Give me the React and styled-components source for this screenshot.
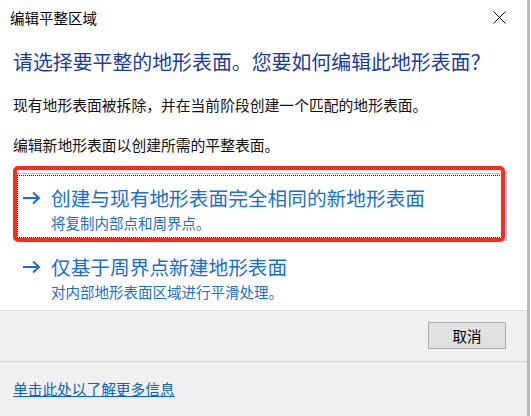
import styled, { createGlobalStyle } from "styled-components";

const GlobalStyle = createGlobalStyle`
  html, body {
    margin: 0;
    padding: 0;
    background: #ffffff;
  }
  body {
    font-family: "Noto Sans CJK SC", "Noto Sans", sans-serif;
  }
`;

const options = [
  {
    title: "创建与现有地形表面完全相同的新地形表面",
    note: "将复制内部点和周界点。",
    focused: true,
  },
  {
    title: "仅基于周界点新建地形表面",
    note: "对内部地形表面区域进行平滑处理。",
    focused: false,
  },
];

function Arrow() {
  return (
    <svg width="19" height="14" viewBox="0 0 19 14" fill="none">
      <path d="M1 7H17" stroke="#1b6fd0" strokeWidth="2" />
      <path d="M11 1.5L17 7L11 12.5" stroke="#1b6fd0" strokeWidth="2" />
    </svg>
  );
}

function CloseIcon() {
  return (
    <svg width="13" height="13" viewBox="0 0 13 13">
      <path d="M0.5 0.5L12.5 12.5M12.5 0.5L0.5 12.5" stroke="#111" strokeWidth="1" />
    </svg>
  );
}

function CommandLink({ title, note, focused }) {
  return (
    <LinkBox $focused={focused}>
      <ArrowSlot>
        <Arrow />
      </ArrowSlot>
      <LinkText>
        <LinkTitle>{title}</LinkTitle>
        <LinkNote>{note}</LinkNote>
      </LinkText>
    </LinkBox>
  );
}

export default function App() {
  return (
    <>
      <GlobalStyle />
      <Dialog>
        <TitleBar>
          <span>编辑平整区域</span>
          <CloseButton>
            <CloseIcon />
          </CloseButton>
        </TitleBar>
        <Content>
          <Heading>请选择要平整的地形表面。您要如何编辑此地形表面？</Heading>
          <Text>现有地形表面被拆除，并在当前阶段创建一个匹配的地形表面。</Text>
          <Text>编辑新地形表面以创建所需的平整表面。</Text>
          <Links>
            {options.map((o) => (
              <CommandLink key={o.title} {...o} />
            ))}
          </Links>
        </Content>
        <ButtonBar>
          <Button>取消</Button>
        </ButtonBar>
        <Footer>
          <MoreLink>单击此处以了解更多信息</MoreLink>
        </Footer>
      </Dialog>
    </>
  );
}

const Dialog = styled.div`
  width: 527px;
  height: 416px;
  border-right: 3px solid #b9b9b9;
  display: flex;
  flex-direction: column;
  background: #ffffff;
`;

const TitleBar = styled.div`
  height: 34px;
  display: flex;
  align-items: center;
  justify-content: space-between;
  padding: 0 21px 0 10px;
  font-size: 14.5px;
  color: #000;
`;

const CloseButton = styled.div`
  display: flex;
  align-items: center;
  padding-top: 1px;
`;

const Content = styled.div`
  flex: 1;
  padding: 15px 20px 0 13px;
  display: flex;
  flex-direction: column;
`;

const Heading = styled.div`
  font-size: 19.9px;
  line-height: 26px;
  color: #1a3c9e;
  white-space: nowrap;
  margin-bottom: 20px;
`;

const Text = styled.div`
  font-size: 14.8px;
  line-height: 20px;
  color: #111;
  margin-bottom: 20px;
  white-space: nowrap;
`;

const Links = styled.div`
  display: flex;
  flex-direction: column;
  gap: 1px;
  margin-top: -2px;
  padding-left: 3px;
  width: 491px;
`;

const LinkBox = styled.div`
  position: relative;
  height: 68px;
  box-sizing: border-box;
  display: flex;
  align-items: flex-start;
  padding: 12px 0 0 5px;
  border: 1px solid ${(p) => (p.$focused ? "#99c7ef" : "transparent")};
  &::before {
    content: "";
    display: ${(p) => (p.$focused ? "block" : "none")};
    position: absolute;
    inset: 1px 2px 2px 0;
    border: 1px dotted #222;
  }
  &::after {
    content: "";
    display: ${(p) => (p.$focused ? "block" : "none")};
    position: absolute;
    top: -8px;
    left: -4px;
    right: 1px;
    bottom: -2px;
    border: 4px solid #ff2a1c;
    border-radius: 5px;
  }
`;

const ArrowSlot = styled.div`
  width: 29px;
  height: 24px;
  display: flex;
  align-items: center;
`;

const LinkText = styled.div`
  display: flex;
  flex-direction: column;
  gap: 4px;
`;

const LinkTitle = styled.div`
  font-size: 19.7px;
  line-height: 24px;
  color: #1b6fd0;
  white-space: nowrap;
`;

const LinkNote = styled.div`
  font-size: 14.5px;
  line-height: 18px;
  color: #1b6fd0;
  white-space: nowrap;
`;

const ButtonBar = styled.div`
  height: 51px;
  box-sizing: border-box;
  border-top: 1px solid #dcdcdc;
  background: #f0f0f0;
  display: flex;
  justify-content: flex-end;
  align-items: flex-start;
  padding: 11px 21px 0 0;
`;

const Button = styled.div`
  width: 78px;
  height: 27px;
  box-sizing: border-box;
  border: 1px solid #adadad;
  background: #e1e1e1;
  display: flex;
  align-items: center;
  justify-content: center;
  font-size: 14.5px;
  color: #000;
`;

const Footer = styled.div`
  flex: 1;
  border-top: 2px solid #dfdfdf;
  box-shadow: inset 0 1px 0 #ffffff;
  background: #f0f0f0;
  display: flex;
  align-items: center;
  padding: 0 13px 2px;
`;

const MoreLink = styled.a`
  font-size: 14.7px;
  line-height: 18px;
  color: #0a63c9;
  text-decoration: underline;
  cursor: pointer;
`;
